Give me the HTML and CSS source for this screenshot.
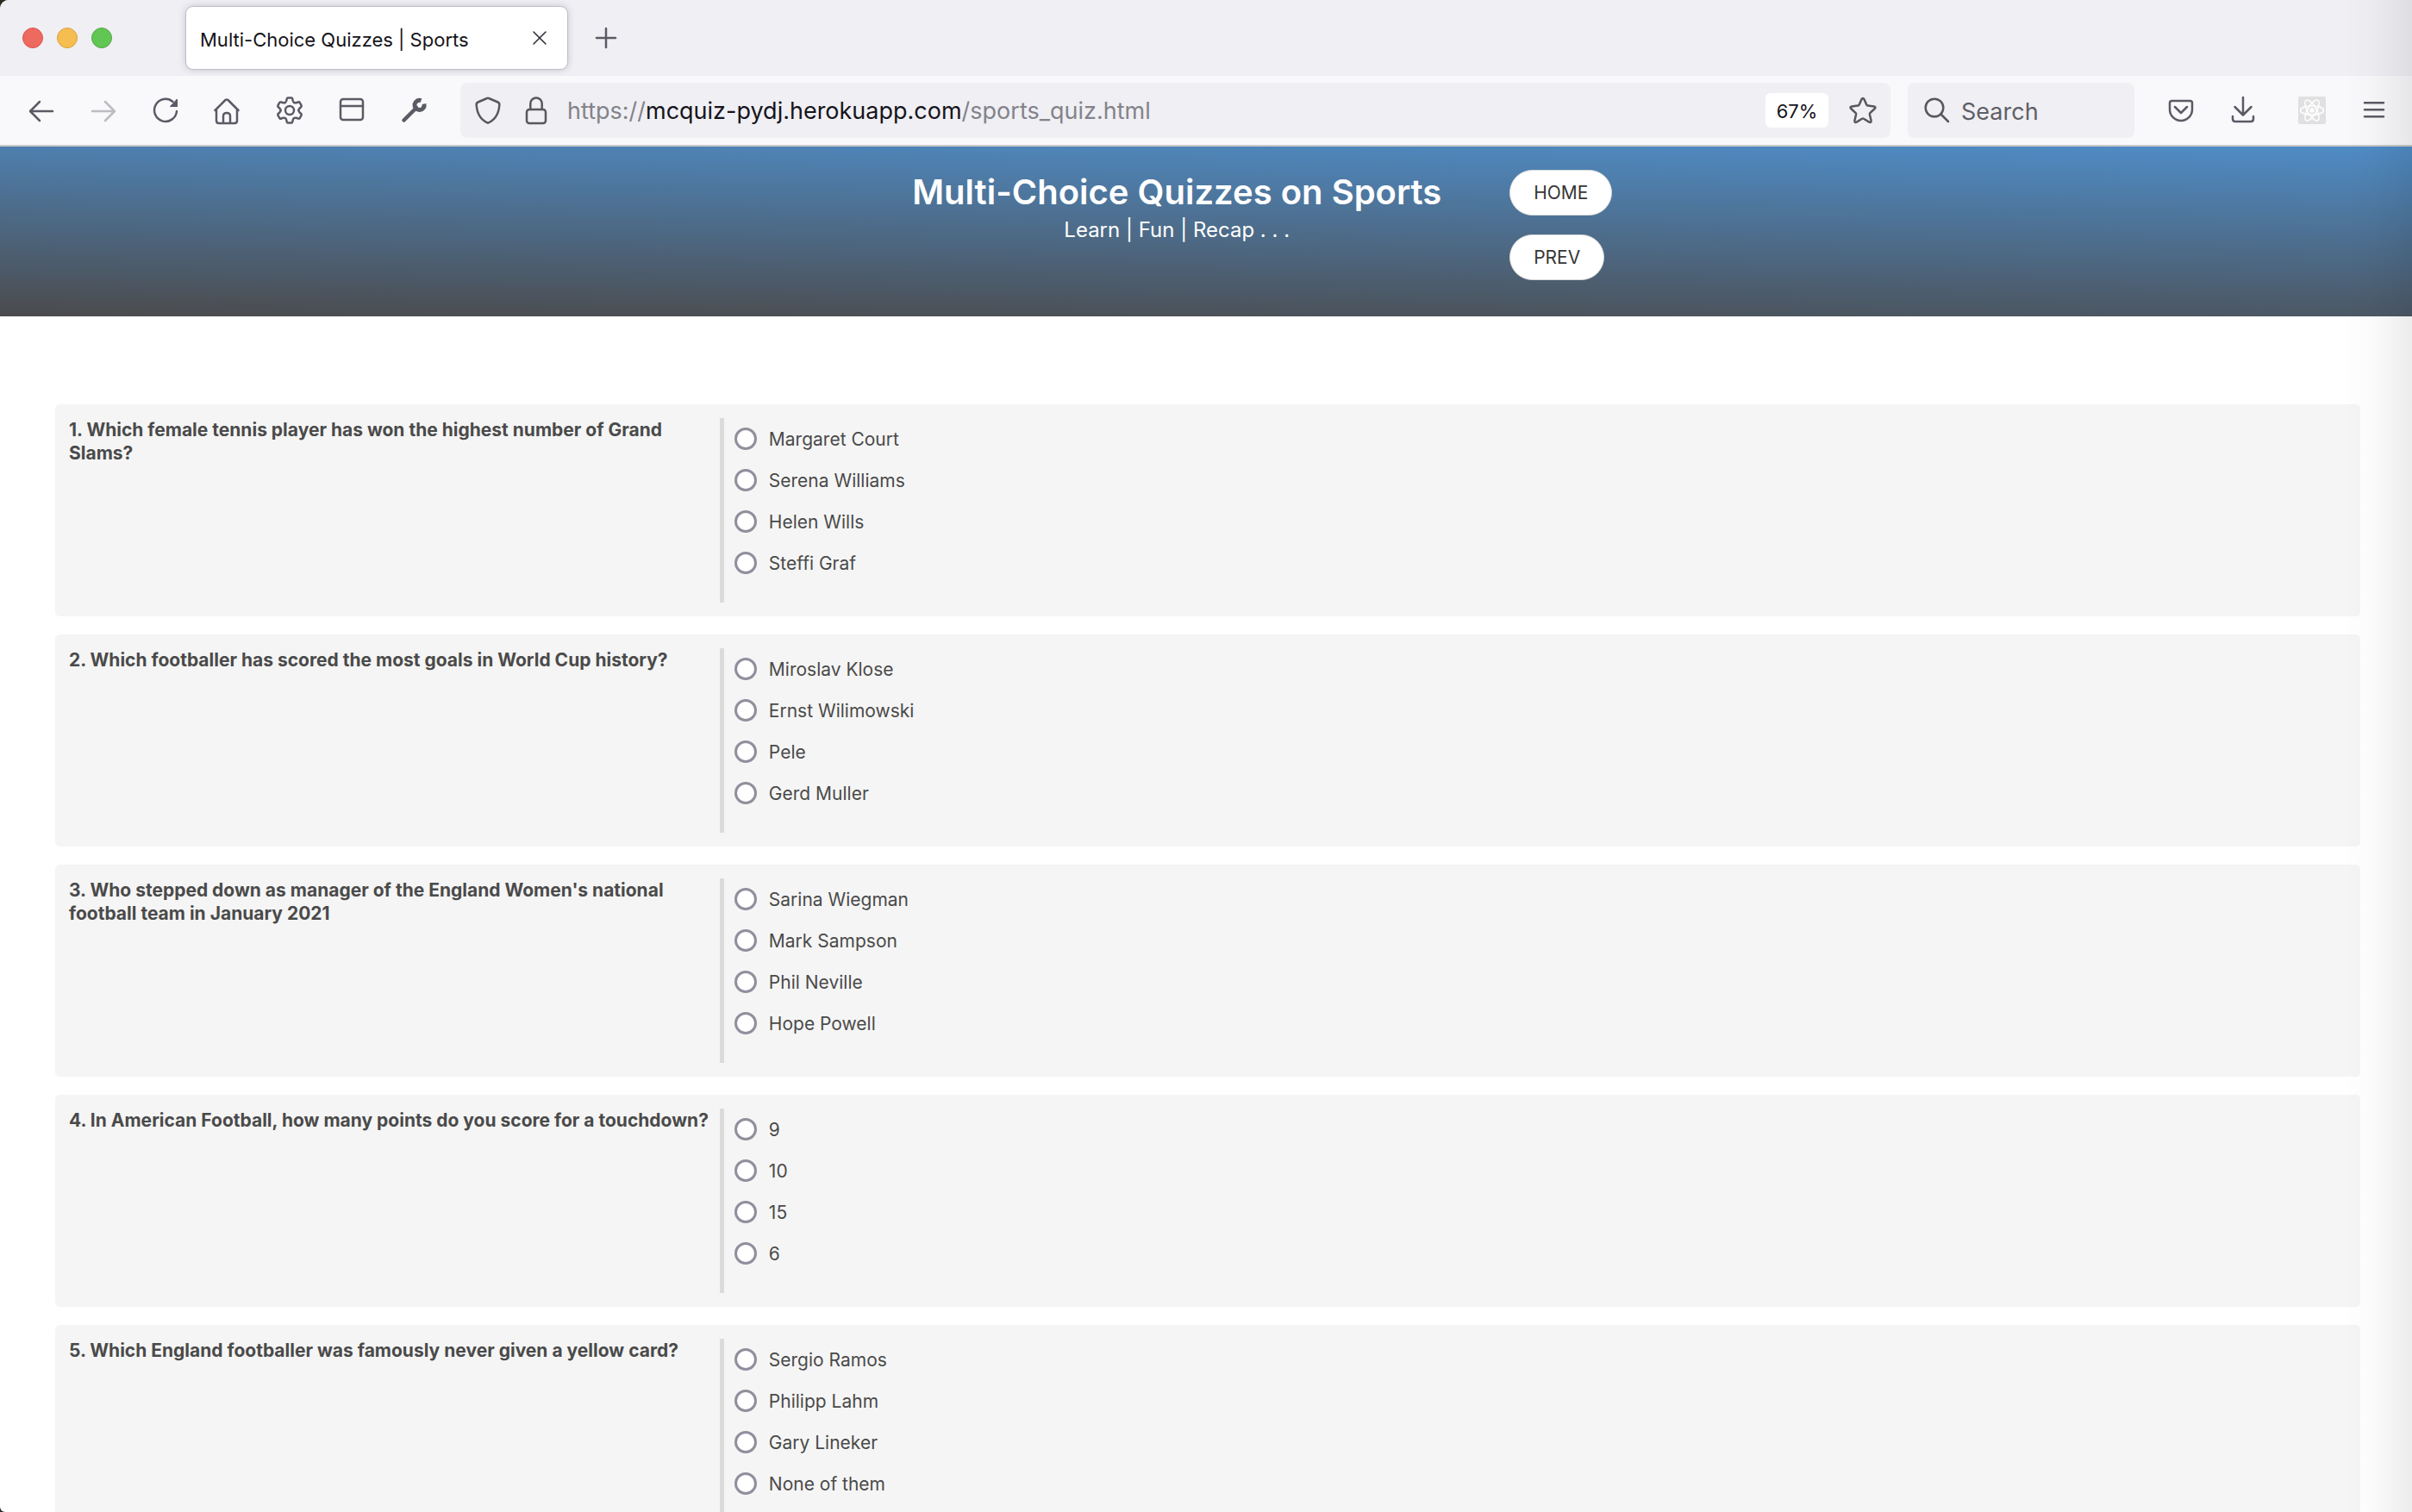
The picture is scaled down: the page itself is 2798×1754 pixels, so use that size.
FILE: index.html
```html
<!DOCTYPE html>
<html lang="en">
<head>
<meta charset="utf-8">
<title>Multi-Choice Quizzes | Sports</title>
<link rel="stylesheet" href="styles.css">
</head>
<body>
<div class="window">
  <div class="tabbar">
    <div class="lights">
      <button class="light light-close" aria-label="Close window"></button>
      <button class="light light-min" aria-label="Minimise window"></button>
      <button class="light light-max" aria-label="Maximise window"></button>
    </div>
    <div class="tab">
      <span class="tab-title">Multi-Choice Quizzes | Sports</span>
      <button class="icon-btn tab-close" aria-label="Close tab"><svg viewBox="0 0 16 16"><path d="M1 1l14 14M15 1L1 15"/></svg></button>
    </div>
    <button class="icon-btn new-tab" aria-label="New tab"><svg viewBox="0 0 24 24"><path d="M12 1v22M1 12h22"/></svg></button>
  </div>

  <div class="toolbar">
    <div class="tools">
      <button class="icon-btn" aria-label="Back"><svg viewBox="0 0 32 32"><path d="M29 17H3.500M14 6L3 17l11 11"/></svg></button>
      <button class="icon-btn" aria-label="Forward" disabled><svg viewBox="0 0 32 32"><path d="M3 17h25.500M18 6l11 11-11 11"/></svg></button>
      <button class="icon-btn" aria-label="Reload"><svg viewBox="0 0 32 32"><path d="M29 17A13 13 0 1 1 24.500 6"/><path class="solid" d="M30 3.500V12h-8.500q-1 0-.3-.8l7.500-8q1.300-1 1.300.3z"/></svg></button>
      <button class="icon-btn" aria-label="Home"><svg viewBox="0 0 32 32"><path d="M1.500 16L13.500 4Q15 3 16.500 4L28.500 16M3 15v13q0 3 3 3h18q3 0 3-3V15M11 31v-8.500q0-3.500 4-3.500t4 3.500V31"/></svg></button>
      <button class="icon-btn" aria-label="Settings"><svg viewBox="-16 -16 32 32"><circle r="5"/><path id="tooth" d="M-5.200-9Q-4.200-9.600-3.800-11L-3.300-13.200Q-3-14.600-2-14.600H2Q3-14.600 3.300-13.200L3.800-11Q4.200-9.600 5.200-9"/><use href="#tooth" transform="rotate(60)"/><use href="#tooth" transform="rotate(120)"/><use href="#tooth" transform="rotate(180)"/><use href="#tooth" transform="rotate(240)"/><use href="#tooth" transform="rotate(300)"/></svg></button>
      <button class="icon-btn" aria-label="Sidebar"><svg viewBox="0 0 32 32"><rect x="3" y="3" width="26" height="24" rx="3"/><path d="M3 11h26"/></svg></button>
      <button class="icon-btn" aria-label="Developer tools"><svg viewBox="0 0 32 32"><path class="handle" d="M4.500 27.500L19 13"/><path class="jaw" d="M24.500 4.600A5.600 5.600 0 1 0 28 8.500"/></svg></button>
    </div>
    <div class="urlbar">
      <button class="icon-btn" aria-label="Tracking protection"><svg viewBox="0 0 32 32"><path d="M15 2Q16 1.500 17 2L27.500 6.500Q29.500 7.300 29.300 9.500C28.800 19 24.500 27 16 30.700C7.500 27 3.200 19 2.700 9.500Q2.500 7.300 4.500 6.500z"/></svg></button>
      <button class="icon-btn" aria-label="Connection secure"><svg viewBox="0 0 32 32"><rect x="5" y="15" width="22" height="16" rx="3"/><path d="M9.300 15V8.200a6.700 6.700 0 0 1 13.400 0V15"/></svg></button>
      <div class="url" role="textbox" aria-label="Address" contenteditable="true" spellcheck="false">https://<span class="host">mcquiz-pydj.herokuapp.com</span>/sports_quiz.html</div>
      <button class="zoom">67%</button>
      <button class="icon-btn" aria-label="Bookmark"><svg viewBox="0 0 32 32"><path d="M14.600 3Q16 .8 17.400 3L20.300 9.600Q20.700 10.500 21.800 10.600L29 11.500Q31.500 12 29.800 14L24.300 19.200Q23.700 19.800 23.900 20.800L25.600 28Q25.800 30.800 23.300 29.600L17 25.800Q16 25.200 15 25.800L8.700 29.600Q6.200 30.800 6.400 28L8.100 20.800Q8.300 19.800 7.700 19.200L2.200 14Q.5 12 3 11.500L10.200 10.600Q11.300 10.500 11.700 9.600z"/></svg></button>
    </div>
    <div class="search">
      <svg viewBox="0 0 32 32" aria-hidden="true"><circle cx="15" cy="13" r="10.300"/><path d="M22.500 20.500L31 29"/></svg>
      <input type="text" placeholder="Search" aria-label="Search">
    </div>
    <div class="tools extras">
      <button class="icon-btn" aria-label="Save to Pocket"><svg viewBox="0 0 32 32"><path d="M5.500 5h21q2.500 0 2.500 2.500V15a13 13 0 0 1-26 0V7.500Q3 5 5.500 5zM9 12l7 7 7-7"/></svg></button>
      <button class="icon-btn" aria-label="Downloads"><svg viewBox="0 0 32 32"><path d="M16 1v20M6.500 12l9.500 9.500L25.500 12M4 23v3q0 3 3 3h18q3 0 3-3v-3"/></svg></button>
      <button class="icon-btn react" aria-label="React developer tools"><svg viewBox="-16 -16 32 32"><rect class="tile" x="-16" y="-16" width="32" height="32" rx="2"/><circle class="nucleus" r="2.800"/><ellipse rx="13.500" ry="5.200"/><ellipse rx="13.500" ry="5.200" transform="rotate(60)"/><ellipse rx="13.500" ry="5.200" transform="rotate(120)"/></svg></button>
      <button class="icon-btn" aria-label="Menu"><svg viewBox="0 0 32 32"><path d="M5 7.300h22M5 15.300h22M5 23.300h22"/></svg></button>
    </div>
  </div>

  <div class="page">
    <header class="banner">
      <div class="banner-text">
        <h1>Multi-Choice Quizzes on Sports</h1>
        <p>Learn | Fun | Recap . . .</p>
      </div>
      <nav class="banner-nav">
        <a href="#home">HOME</a>
        <a href="#prev">PREV</a>
      </nav>
    </header>

    <form class="quiz">
      <section class="card" role="radiogroup" aria-labelledby="q1">
        <h2 id="q1">1. Which female tennis player has won the highest number of Grand Slams?</h2>
        <div class="answers">
          <label><input type="radio" name="q1">Margaret Court</label>
          <label><input type="radio" name="q1">Serena Williams</label>
          <label><input type="radio" name="q1">Helen Wills</label>
          <label><input type="radio" name="q1">Steffi Graf</label>
        </div>
      </section>
      <section class="card" role="radiogroup" aria-labelledby="q2">
        <h2 id="q2">2. Which footballer has scored the most goals in World Cup history?</h2>
        <div class="answers">
          <label><input type="radio" name="q2">Miroslav Klose</label>
          <label><input type="radio" name="q2">Ernst Wilimowski</label>
          <label><input type="radio" name="q2">Pele</label>
          <label><input type="radio" name="q2">Gerd Muller</label>
        </div>
      </section>
      <section class="card" role="radiogroup" aria-labelledby="q3">
        <h2 id="q3">3. Who stepped down as manager of the England Women's national football team in January 2021</h2>
        <div class="answers">
          <label><input type="radio" name="q3">Sarina Wiegman</label>
          <label><input type="radio" name="q3">Mark Sampson</label>
          <label><input type="radio" name="q3">Phil Neville</label>
          <label><input type="radio" name="q3">Hope Powell</label>
        </div>
      </section>
      <section class="card" role="radiogroup" aria-labelledby="q4">
        <h2 id="q4">4. In American Football, how many points do you score for a touchdown?</h2>
        <div class="answers">
          <label><input type="radio" name="q4">9</label>
          <label><input type="radio" name="q4">10</label>
          <label><input type="radio" name="q4">15</label>
          <label><input type="radio" name="q4">6</label>
        </div>
      </section>
      <section class="card" role="radiogroup" aria-labelledby="q5">
        <h2 id="q5">5. Which England footballer was famously never given a yellow card?</h2>
        <div class="answers">
          <label><input type="radio" name="q5">Sergio Ramos</label>
          <label><input type="radio" name="q5">Philipp Lahm</label>
          <label><input type="radio" name="q5">Gary Lineker</label>
          <label><input type="radio" name="q5">None of them</label>
        </div>
      </section>
    </form>
  </div>
</div>
</body>
</html>
```
FILE: styles.css
```css
* { box-sizing: border-box; }

body {
  margin: 0;
  background: #2e2a20;
  font-family: Inter, "Liberation Sans", sans-serif;
  color: #4a4a4a;
}

button { font: inherit; border: 0; padding: 0; background: none; }

.window {
  position: relative;
  display: flex;
  flex-direction: column;
  height: 100vh;
  overflow: hidden;
  background: #fff;
  border-radius: 10px 0 0 6px;
}

/* soft shade cast along the right-hand edge */
.window::after {
  content: "";
  position: absolute;
  inset: 0 0 0 auto;
  width: 80px;
  background: linear-gradient(to right, rgba(0, 0, 0, 0), rgba(0, 0, 0, 0.015) 40%, rgba(0, 0, 0, 0.075));
  pointer-events: none;
}

/* icons */
svg {
  display: block;
  width: 100%;
  height: 100%;
  fill: none;
  stroke: currentColor;
  stroke-width: 2.5;
  stroke-linecap: round;
  stroke-linejoin: round;
  overflow: visible;
}
.icon-btn { flex: none; width: 32px; height: 32px; color: #5b5b66; }
.icon-btn:disabled { color: #bcbcc1; }
.solid { fill: currentColor; stroke: none; }
.handle { stroke-width: 4.500; }
.jaw { stroke-width: 5; stroke-linecap: butt; }

/* tab strip */
.tabbar {
  flex: none;
  display: flex;
  align-items: center;
  height: 88px;
  padding-left: 26px;
  background: #f0eff4;
}
.lights { display: flex; gap: 16px; margin-right: 86px; }
.light { width: 24px; height: 24px; border-radius: 50%; border: 1px solid; }
.light-close { background: #ee6a5f; border-color: #d8564b; }
.light-min { background: #f6be50; border-color: #d9a23c; }
.light-max { background: #62c655; border-color: #52a842; }
.tab {
  display: flex;
  align-items: center;
  justify-content: space-between;
  width: 442px;
  height: 72px;
  padding: 0 24px 0 16px;
  border-radius: 8px;
  background: #fff;
  box-shadow: 0 0 0 1px #c0bfc9, 0 0 8px rgba(60, 60, 80, 0.3);
}
.tab-title { padding-top: 3px; font-size: 22px; line-height: 28px; color: #15141a; white-space: nowrap; }
.tab-close { width: 16px; height: 16px; color: #2b2a33; }
.tab-close svg { stroke-width: 1.500; }
.new-tab { width: 24px; height: 24px; margin-left: 33px; }

/* toolbar */
.toolbar {
  flex: none;
  display: flex;
  align-items: center;
  height: 82px;
  padding: 0 28px 0 32px;
  background: #f9f9fb;
  border-bottom: 2px solid #cbcbcb;
}
.tools { display: flex; gap: 40px; }
.urlbar {
  flex: 1;
  display: flex;
  align-items: center;
  height: 64px;
  margin: 0 20px 0 38px;
  padding: 0 16px;
  border-radius: 8px;
  background: #f0eff4;
}
.urlbar .icon-btn { color: #58585c; }
.urlbar .icon-btn + .icon-btn { margin-left: 24px; }
.url { flex: 1; margin-left: 20px; padding-top: 2px; font-size: 27px; line-height: 32px; color: #83838a; white-space: nowrap; outline: 0; }
.host { color: #15141a; }
.zoom {
  width: 73px;
  height: 40px;
  margin-right: 24px;
  padding-top: 2px;
  border-radius: 6px;
  background: #fff;
  font-size: 22px;
  color: #15141a;
}
.search {
  display: flex;
  align-items: center;
  gap: 14px;
  width: 263px;
  height: 64px;
  padding: 0 16px;
  border-radius: 8px;
  background: #f0eff4;
  color: #58585c;
}
.search svg { flex: none; width: 32px; height: 32px; }
.search input {
  flex: 1;
  min-width: 0;
  border: 0;
  padding: 2px 0 0;
  background: none;
  font: inherit;
  font-size: 27px;
  outline: 0;
}
.search input::placeholder { color: #5f5f66; opacity: 1; }
.extras { margin-left: 38px; }
.react { margin-left: 8px; }
.react svg { stroke: #fff; stroke-width: 1.500; }
.tile { fill: #e0e0e0; stroke: none; }
.nucleus { fill: #fff; stroke: none; }

/* quiz page */
.page { flex: 1; min-height: 0; overflow: hidden; }
.banner {
  display: grid;
  grid-template-columns: 772fr 1047fr;
  padding: 27px 0 42px 35%;
  background: linear-gradient(1deg, #4b4b4d, #4f8cc6);
}
.banner-text { text-align: center; color: #fff; }
.banner h1 { margin: 0; font-size: 40px; font-weight: 600; line-height: 52px; white-space: nowrap; }
.banner p { margin: 2px 0 0; font-size: 24px; line-height: 32px; }
.banner-nav { display: flex; flex-direction: column; align-items: flex-start; gap: 22px; }
.banner-nav a {
  padding: 12px 27px;
  border: 1px solid #dbdbdb;
  border-radius: 27px;
  background: #fff;
  font-size: 21px;
  line-height: 27px;
  color: #363636;
  text-decoration: none;
}

.quiz { display: flex; flex-direction: column; gap: 21px; padding: 102px 60px 64px 64px; }
.card {
  display: grid;
  grid-template-columns: minmax(0, 2fr) minmax(0, 5fr);
  padding: 16px;
  border-radius: 5px;
  background: #f5f5f5;
}
.card h2 { margin: 0; font-size: 21px; font-weight: 700; line-height: 27px; }
.answers { padding: 0 0 22px 12px; border-left: 5px solid #dbdbdb; }
.answers label { display: flex; align-items: center; gap: 14px; height: 48px; font-size: 21px; line-height: 27px; }
.answers input {
  appearance: none;
  width: 26px;
  height: 26px;
  margin: 0;
  border: 3px solid #8f8f9d;
  border-radius: 50%;
  background: #fff;
}
```
